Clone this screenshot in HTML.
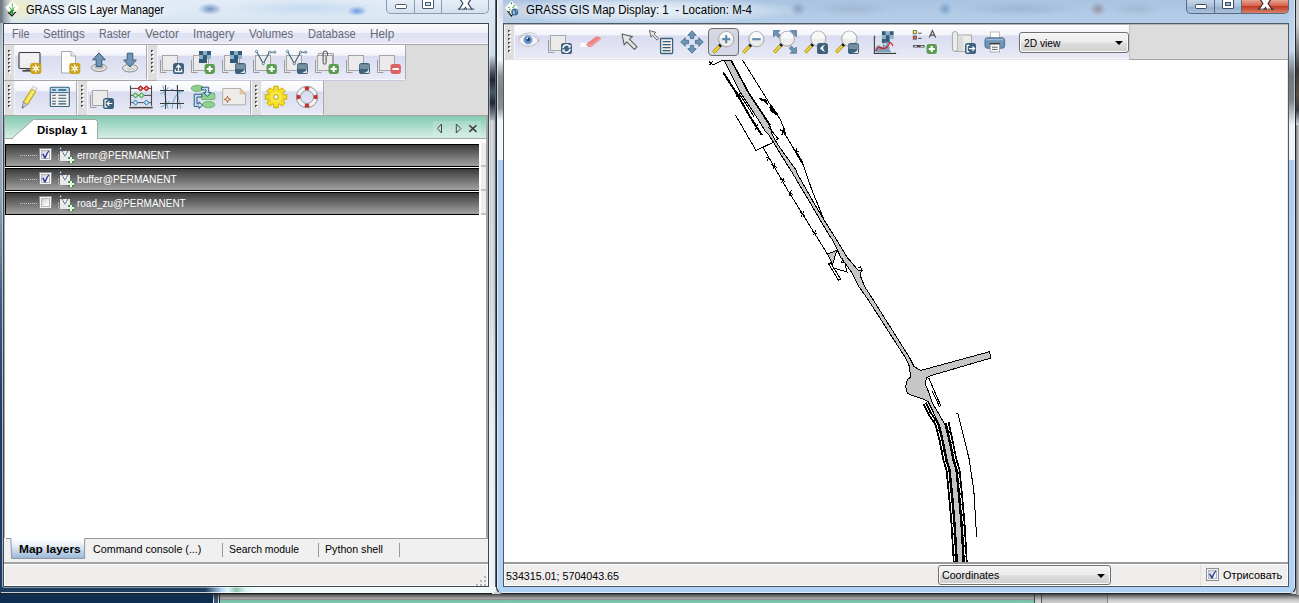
<!DOCTYPE html>
<html>
<head>
<meta charset="utf-8">
<title>GRASS GIS</title>
<style>
html,body{margin:0;padding:0;}
body{width:1299px;height:603px;overflow:hidden;position:relative;background:#7fc6ae;font-family:"Liberation Sans",sans-serif;font-size:12px;color:#000;}
.a{position:absolute;}
.t{position:absolute;white-space:nowrap;line-height:16px;height:16px;transform-origin:0 50%;}
svg{position:absolute;overflow:visible;}
.tb{position:absolute;background:linear-gradient(#fefeff 0,#f3f4fa 30%,#d9dcf0 33%,#e8eaf6 100%);border-bottom:1px solid #f4f5fb;box-sizing:border-box;}
.grip{position:absolute;left:0;top:0;bottom:-1px;width:9px;background:#dedede;border-left:1px solid #fafafa;border-right:1px solid #f4f4fa;}
.grip i{position:absolute;left:3px;width:3px;height:3px;background:linear-gradient(135deg,#2e2e2e 0,#5a5a5a 38%,#fff 55%);}
.row{position:absolute;left:5px;width:474px;height:23px;box-sizing:border-box;border:1px solid #000;border-right:none;background:linear-gradient(#3b3b3b,#a2a2a2);}
.cb{position:absolute;width:13px;height:13px;box-sizing:border-box;border:1px solid #8e8f8f;background:#f4f4f4;}
.cb b{position:absolute;left:1px;top:1px;right:1px;bottom:1px;border:1px solid #b2b7bd;background:linear-gradient(135deg,#cdd1d6,#f8f8f8 80%);}
.combo{position:absolute;box-sizing:border-box;border:1px solid #707070;border-radius:3px;background:linear-gradient(#f4f4f4 0,#ececec 48%,#dedede 52%,#cfcfcf 100%);box-shadow:inset 0 0 0 1px #fcfcfc;}
.arr{position:absolute;width:0;height:0;border-left:4px solid transparent;border-right:4px solid transparent;border-top:4px solid #000;}
.vsep{position:absolute;width:1px;background:#9a9a9a;}
</style>
</head>
<body>
<div class="a" style="left:0px;top:585px;width:213px;height:18px;background:#0f2d4e;"></div>
<div class="a" style="left:213px;top:590px;width:1px;height:13px;background:#dfe6ee;"></div>
<div class="a" style="left:214px;top:590px;width:4px;height:13px;background:#3d5a7c;"></div>
<div class="a" style="left:218px;top:590px;width:1px;height:13px;background:#dfe6ee;"></div>
<div class="a" style="left:219px;top:590px;width:1px;height:13px;background:#1a2c44;"></div>
<div class="a" style="left:220px;top:590px;width:814px;height:10px;background:#cfcfcf;"></div>
<div class="a" style="left:220px;top:599px;width:814px;height:1px;background:#a69e9e;"></div>
<div class="a" style="left:1034px;top:585px;width:1px;height:18px;background:#4a4a4a;"></div>
<div class="a" style="left:1035px;top:585px;width:6px;height:18px;background:#d2d2d2;"></div>
<div class="a" style="left:1041px;top:585px;width:1px;height:18px;background:#5a5a5a;"></div>
<div class="a" style="left:1042px;top:585px;width:66px;height:18px;background:#cacaca;"></div>
<div class="a" style="left:1107px;top:585px;width:1px;height:18px;background:#8e8e8e;"></div>
<div class="a" style="left:1108px;top:585px;width:191px;height:18px;background:#d9d9d9;"></div>
<div class="a" style="left:1296px;top:0px;width:3px;height:603px;background:linear-gradient(#c9c9c9 0,#c9c9c9 25px,#8a8a8a 45px,#3c3a3c 70px,#5a5044 95px,#3a3c44 110px,#cfd3d8 125px,#d8d8d8 100%);"></div>
<div class="a" style="left:213px;top:594px;width:1086px;height:8px;background:linear-gradient(rgba(30,30,30,0.8),rgba(50,50,50,0.42) 40%,rgba(80,80,80,0.12) 75%,rgba(80,80,80,0));"></div>
<div class="a" style="left:1296px;top:125px;width:3px;height:470px;background:linear-gradient(90deg,#7a7a7a,#a6a6a6 50%,#c6c6c6);"></div>
<div class="a" style="left:0px;top:0px;width:497px;height:594px;background:linear-gradient(#e2ecf6,#d8e6f3 24px,#d2e1f0);border-radius:0 0 7px 7px;"></div>
<div class="a" style="left:0px;top:0px;width:3px;height:594px;background:linear-gradient(#9aa3ad 0,#b9c6d3 60px,#8ea0b4 200px,#3f5c7e 300px,#1c3c60 420px,#1c3c60 100%);border-radius:0 0 0 7px;"></div>
<div class="a" style="left:2px;top:23px;width:1px;height:564px;background:linear-gradient(#c9d6e2,#9fb1c4);"></div>
<div class="a" style="left:489px;top:0px;width:6px;height:590px;background:linear-gradient(#dfeaf4 0,#d0dce6 55px,#4a5460 72px,#1e2630 80px,#4a5866 92px,#1e2834 103px,#6a7682 113px,#bcc0c4 122px,#c6cace 300px,#d4dde4 360px,#e2ecf1 440px,#e6eff3 100%);"></div>
<div class="a" style="left:490px;top:120px;width:4px;height:467px;background:linear-gradient(90deg,rgba(255,255,255,0),rgba(255,255,255,0.5),rgba(255,255,255,0));"></div>
<div class="a" style="left:495px;top:0px;width:1px;height:590px;background:#5a626c;"></div>
<div class="a" style="left:0px;top:587px;width:497px;height:7px;background:linear-gradient(90deg,#1c3c60 0,#1c3c60 205px,#b9d8f4 222px,#e2f6fb 228px,#8cc3ae 236px,#dff4f6 246px,#f2fbfc 260px,#eef8fa 100%);border-radius:0 0 7px 7px;"></div>
<div class="a" style="left:3px;top:587px;width:486px;height:1px;background:rgba(255,255,255,0.45);"></div>
<div class="a" style="left:489px;top:23px;width:1px;height:564px;background:rgba(255,255,255,0.5);"></div>
<div class="a" style="left:1px;top:592px;width:490px;height:1px;background:rgba(255,255,255,0.75);"></div>
<div class="a" style="left:0px;top:593px;width:492px;height:1px;background:#1a1e24;"></div>
<div class="a" style="left:0px;top:0px;width:40px;height:23px;background:radial-gradient(ellipse 22px 15px at 19px 8px,rgba(238,236,196,1),rgba(238,236,200,0.6) 55%,rgba(240,238,200,0) 100%);"></div>
<div class="a" style="left:0px;top:0px;width:12px;height:23px;background:linear-gradient(90deg,rgba(104,112,122,0.95),rgba(110,118,128,0.5) 45%,rgba(110,118,128,0));"></div>
<div class="a" style="left:20px;top:2px;width:160px;height:20px;background:radial-gradient(ellipse 80px 11px at 50% 50%,rgba(255,255,255,0.75),rgba(255,255,255,0));"></div>
<div class="a" style="left:195px;top:2px;width:30px;height:14px;background:radial-gradient(ellipse 12px 6px at 50% 50%,rgba(70,110,180,0.7),rgba(120,160,215,0));"></div>
<div class="a" style="left:342px;top:4px;width:30px;height:14px;background:radial-gradient(ellipse 10px 5px at 50% 50%,rgba(60,120,215,0.75),rgba(110,160,225,0));"></div>
<div class="a" style="left:225px;top:0px;width:160px;height:20px;background:radial-gradient(ellipse 80px 9px at 50% 40%,rgba(170,200,235,0.45),rgba(170,200,235,0));"></div>
<div class="t" id="title1" style="left:26px;top:2.03px;font-size:12px;font-weight:normal;color:#000;transform:scaleX(0.9195);">GRASS GIS Layer Manager</div>
<svg style="left:4px;top:0" width="16" height="17"><path d="M8 1L14.9 7.4L8 15.7L1.2 7.4z" fill="#fff"/><path d="M4.2 12.2L8 15.8L11.6 11.8" fill="none" stroke="#111" stroke-width="1.2"/><path d="M8 13.4q-0.2 -3.4 -2.4 -5.8M8 13q0.6 -3.2 2.4 -5.6M8.2 12.4q-0.2 -4.6 0.3 -8.6" fill="none" stroke="#2aa32e" stroke-width="0.9" stroke-linecap="round" stroke-dasharray="1.6 0.9"/><path d="M6 11.6l3.6 -1.2M6.4 12.6l2.6 0.4M7.2 11l1.6 1.8" stroke="#168a1e" stroke-width="1.1" stroke-linecap="round"/><path d="M7.6 2.4l0.1 0M5.2 5l0.1 0" stroke="#8ed08e" stroke-width="0.8" stroke-linecap="round"/></svg>
<div class="a" style="left:386px;top:0px;width:103px;height:14px;border:1px solid #8d9cae;border-top:none;border-radius:0 0 5px 5px;box-sizing:border-box;background:linear-gradient(#e6eff8,#d3e0ee);"></div>
<div class="a" style="left:414px;top:0px;width:1px;height:13px;background:#8d9cae;"></div>
<div class="a" style="left:441px;top:0px;width:1px;height:13px;background:#8d9cae;"></div>
<div class="a" style="left:395px;top:4px;width:12px;height:5px;background:#fff;border:1px solid #4e5867;box-sizing:border-box;border-radius:1.5px;"></div>
<div class="a" style="left:422px;top:-1px;width:12px;height:10px;background:#fff;border:1px solid #4e5867;box-sizing:border-box;border-radius:1px;"></div>
<div class="a" style="left:425px;top:2px;width:6px;height:4px;background:#c4e2f2;border:1px solid #4e5867;box-sizing:border-box;"></div>
<svg style="left:457px;top:0;overflow:hidden" width="18" height="9.6"><path d="M3.6 -4L13.4 11M13.4 -4L3.6 11" stroke="#3e4857" stroke-width="5.6" fill="none"/><path d="M3.6 -4L13.4 11M13.4 -4L3.6 11" stroke="#fff" stroke-width="3.2" fill="none"/><path d="M0.8 9.1h6.6M10.6 9.1h6.6" stroke="#3e4857" stroke-width="1"/></svg>
<div class="a" style="left:3px;top:23px;width:486px;height:564px;background:#3e4650;"></div>
<div class="a" style="left:4px;top:24px;width:484px;height:562px;background:#dcdcdc;"></div>
<div class="a" style="left:4px;top:24px;width:484px;height:19px;background:linear-gradient(#fcfcfe 0,#f0f1f9 45%,#dfe2f2 50%,#e5e7f5 100%);"></div>
<div class="a" style="left:4px;top:43px;width:484px;height:1px;background:#f6f6fb;"></div>
<div class="t" id="mn0" style="left:11.5px;top:26.03px;font-size:12px;font-weight:normal;color:#686a76;transform:scaleX(0.8995);">File</div>
<div class="t" id="mn1" style="left:43px;top:26.03px;font-size:12px;font-weight:normal;color:#686a76;transform:scaleX(0.9617);">Settings</div>
<div class="t" id="mn2" style="left:99.3px;top:26.03px;font-size:12px;font-weight:normal;color:#686a76;transform:scaleX(0.8941);">Raster</div>
<div class="t" id="mn3" style="left:145px;top:26.03px;font-size:12px;font-weight:normal;color:#686a76;transform:scaleX(0.9991);">Vector</div>
<div class="t" id="mn4" style="left:193.2px;top:26.03px;font-size:12px;font-weight:normal;color:#686a76;transform:scaleX(0.9594);">Imagery</div>
<div class="t" id="mn5" style="left:249.4px;top:26.03px;font-size:12px;font-weight:normal;color:#686a76;transform:scaleX(0.9624);">Volumes</div>
<div class="t" id="mn6" style="left:308px;top:26.03px;font-size:12px;font-weight:normal;color:#686a76;transform:scaleX(0.9285);">Database</div>
<div class="t" id="mn7" style="left:370.3px;top:26.03px;font-size:12px;font-weight:normal;color:#686a76;transform:scaleX(0.9803);">Help</div>
<div class="a" style="left:4px;top:44px;width:484px;height:1px;background:#a8a8a8;"></div>
<div class="a" style="left:4px;top:80px;width:153px;height:1px;background:#a6a6a6;"></div>
<div class="a" style="left:157px;top:80px;width:249px;height:1px;background:#c6cadc;"></div>
<div class="a" style="left:4px;top:115px;width:484px;height:1px;background:#a9a3a3;"></div>
<div class="tb" style="left:4px;top:45px;width:143px;height:35px;border-right:1px solid #a8a8ae;"><div class="grip"><i style="top:5px"></i><i style="top:9px"></i><i style="top:13px"></i><i style="top:17px"></i><i style="top:21px"></i><i style="top:25px"></i></div></div>
<svg class="ic" style="left:18px;top:50px" width="24" height="24" viewBox="0 0 24 24"><rect x="1" y="2.5" width="21" height="16" rx="1" fill="#ececec" stroke="#3c3c3c" stroke-width="1.1"/><path d="M2 3.5h19v7q-9 1 -19 6z" fill="#f6f6f6" opacity="0.6"/><rect x="4.5" y="20" width="9" height="1.6" fill="#3c3c3c"/><rect x="8" y="18.8" width="4" height="1.4" fill="#8a8a8a"/><rect x="12.3" y="13" width="11" height="11" rx="2.4" fill="#c9a31b"/><path d="M17.8 18.5L21.2641 20.5" stroke="#fff" stroke-width="1.2"/><path d="M17.8 18.5L17.8 22.5" stroke="#fff" stroke-width="1.2"/><path d="M17.8 18.5L14.3359 20.5" stroke="#fff" stroke-width="1.2"/><path d="M17.8 18.5L14.3359 16.5" stroke="#fff" stroke-width="1.2"/><path d="M17.8 18.5L17.8 14.5" stroke="#fff" stroke-width="1.2"/><path d="M17.8 18.5L21.2641 16.5" stroke="#fff" stroke-width="1.2"/><circle cx="17.8" cy="18.5" r="1.9" fill="#fff"/><circle cx="17.8" cy="18.5" r="0.9" fill="#e8d27a"/></svg>
<svg class="ic" style="left:57px;top:50px" width="24" height="24" viewBox="0 0 24 24"><path d="M4.5 1.5h9.5l4.5 4.5v17h-14z" fill="#fdfdfd" stroke="#a8a8a8"/><path d="M14 1.5v4.5h4.5" fill="#f0f0f0" stroke="#a8a8a8"/><rect x="12.3" y="13" width="11" height="11" rx="2.4" fill="#c9a31b"/><path d="M17.8 18.5L21.2641 20.5" stroke="#fff" stroke-width="1.2"/><path d="M17.8 18.5L17.8 22.5" stroke="#fff" stroke-width="1.2"/><path d="M17.8 18.5L14.3359 20.5" stroke="#fff" stroke-width="1.2"/><path d="M17.8 18.5L14.3359 16.5" stroke="#fff" stroke-width="1.2"/><path d="M17.8 18.5L17.8 14.5" stroke="#fff" stroke-width="1.2"/><path d="M17.8 18.5L21.2641 16.5" stroke="#fff" stroke-width="1.2"/><circle cx="17.8" cy="18.5" r="1.9" fill="#fff"/><circle cx="17.8" cy="18.5" r="0.9" fill="#e8d27a"/></svg>
<svg class="ic" style="left:87px;top:50px" width="24" height="24" viewBox="0 0 24 24"><ellipse cx="12" cy="17.7" rx="7.6" ry="3.8" fill="#e4e4e4" stroke="#8e8e8e"/><ellipse cx="12" cy="17.2" rx="5" ry="2" fill="#c4c4c4"/><path d="M12 2.8l6.3 7h-3.5v6.8h-5.6v-6.8h-3.5z" fill="#6e96b4" stroke="#3b5d78" stroke-linejoin="round"/></svg>
<svg class="ic" style="left:118px;top:50px" width="24" height="24" viewBox="0 0 24 24"><ellipse cx="12" cy="18.2" rx="7.6" ry="3.8" fill="#e4e4e4" stroke="#8e8e8e"/><ellipse cx="13" cy="19" rx="4" ry="1.6" fill="#cfcfcf"/><path d="M12 17l-6.3 -7h3.5v-6.8h5.6v6.8h3.5z" fill="#6e96b4" stroke="#3b5d78" stroke-linejoin="round"/></svg>
<div class="tb" style="left:147px;top:45px;width:259px;height:35px;border-right:1px solid #a8a8ae;"><div class="grip"><i style="top:5px"></i><i style="top:9px"></i><i style="top:13px"></i><i style="top:17px"></i><i style="top:21px"></i><i style="top:25px"></i></div></div>
<svg class="ic" style="left:160px;top:50px" width="24" height="24" viewBox="0 0 24 24"><path d="M0.5 10v12.5h6" fill="none" stroke="#9c9c9c" stroke-width="1"/><rect x="2.5" y="5.5" width="15" height="15" fill="#ebebeb" stroke="#a6a6a6"/><rect x="13" y="13" width="11" height="11" rx="2.6" fill="#3f627c"/><path d="M18.5 21v-5.2M16.2 17.6l2.3 -2.4l2.3 2.4" fill="none" stroke="#fff" stroke-width="1.3"/><path d="M15.3 19.3v2.4h6.4v-2.4" fill="none" stroke="#fff" stroke-width="1.2"/></svg>
<svg class="ic" style="left:191px;top:50px" width="24" height="24" viewBox="0 0 24 24"><path d="M0.5 10v12.5h6" fill="none" stroke="#9c9c9c" stroke-width="1"/><rect x="2.5" y="5.5" width="15" height="15" fill="#ebebeb" stroke="#a6a6a6"/><rect x="8" y="1" width="4" height="4" fill="#335a78"/><rect x="12" y="1" width="4" height="4" fill="#8fb0c9"/><rect x="16" y="1" width="4" height="4" fill="#335a78"/><rect x="8" y="5" width="4" height="4" fill="#8fb0c9"/><rect x="12" y="5" width="4" height="4" fill="#335a78"/><rect x="16" y="5" width="4" height="4" fill="#8fb0c9"/><rect x="8" y="9" width="4" height="4" fill="#335a78"/><rect x="12" y="9" width="4" height="4" fill="#335a78"/><rect x="13.5" y="14" width="10.4" height="10" rx="2.4" fill="#5c9c52"/><path d="M15.7 19h6M18.7 16v6" stroke="#fff" stroke-width="2" fill="none"/></svg>
<svg class="ic" style="left:222px;top:50px" width="24" height="24" viewBox="0 0 24 24"><path d="M0.5 10v12.5h6" fill="none" stroke="#9c9c9c" stroke-width="1"/><rect x="2.5" y="5.5" width="15" height="15" fill="#ebebeb" stroke="#a6a6a6"/><rect x="8" y="1" width="4" height="4" fill="#335a78"/><rect x="12" y="1" width="4" height="4" fill="#8fb0c9"/><rect x="16" y="1" width="4" height="4" fill="#335a78"/><rect x="8" y="5" width="4" height="4" fill="#8fb0c9"/><rect x="12" y="5" width="4" height="4" fill="#335a78"/><rect x="16" y="5" width="4" height="4" fill="#8fb0c9"/><rect x="8" y="9" width="4" height="4" fill="#335a78"/><rect x="12" y="9" width="4" height="4" fill="#335a78"/><rect x="13" y="13" width="11" height="11" rx="2.6" fill="#3f627c"/><path d="M14.8 14.2h7.4a1.2 1.2 0 0 1 1.2 1.2v3.4q-5 0.4 -9.8 0v-3.4a1.2 1.2 0 0 1 1.2 -1.2z" fill="#76909f"/><path d="M23 23v-5.2q-0.6 4.4 -5.4 5.2z" fill="#e4e4e4"/></svg>
<svg class="ic" style="left:253px;top:50px" width="24" height="24" viewBox="0 0 24 24"><path d="M0.5 10v12.5h6" fill="none" stroke="#9c9c9c" stroke-width="1"/><rect x="2.5" y="5.5" width="15" height="15" fill="#ebebeb" stroke="#a6a6a6"/><path d="M3.5 1.5L10.3 13.6L16.5 2.2h5.3" fill="none" stroke="#3d6483" stroke-width="1.1"/><circle cx="3.5" cy="1.5" r="1.1" fill="#fff" stroke="#3d6483" stroke-width="0.8"/><circle cx="10.3" cy="13.6" r="1.1" fill="#fff" stroke="#3d6483" stroke-width="0.8"/><circle cx="16.5" cy="2.2" r="1.1" fill="#fff" stroke="#3d6483" stroke-width="0.8"/><circle cx="21.8" cy="2.2" r="1.1" fill="#fff" stroke="#3d6483" stroke-width="0.8"/><rect x="13.5" y="14" width="10.4" height="10" rx="2.4" fill="#5c9c52"/><path d="M15.7 19h6M18.7 16v6" stroke="#fff" stroke-width="2" fill="none"/></svg>
<svg class="ic" style="left:284px;top:50px" width="24" height="24" viewBox="0 0 24 24"><path d="M0.5 10v12.5h6" fill="none" stroke="#9c9c9c" stroke-width="1"/><rect x="2.5" y="5.5" width="15" height="15" fill="#ebebeb" stroke="#a6a6a6"/><path d="M3.5 1.5L10.3 13.6L16.5 2.2h5.3" fill="none" stroke="#3d6483" stroke-width="1.1"/><circle cx="3.5" cy="1.5" r="1.1" fill="#fff" stroke="#3d6483" stroke-width="0.8"/><circle cx="10.3" cy="13.6" r="1.1" fill="#fff" stroke="#3d6483" stroke-width="0.8"/><circle cx="16.5" cy="2.2" r="1.1" fill="#fff" stroke="#3d6483" stroke-width="0.8"/><circle cx="21.8" cy="2.2" r="1.1" fill="#fff" stroke="#3d6483" stroke-width="0.8"/><rect x="13" y="13" width="11" height="11" rx="2.6" fill="#3f627c"/><path d="M14.8 14.2h7.4a1.2 1.2 0 0 1 1.2 1.2v3.4q-5 0.4 -9.8 0v-3.4a1.2 1.2 0 0 1 1.2 -1.2z" fill="#76909f"/><path d="M23 23v-5.2q-0.6 4.4 -5.4 5.2z" fill="#e4e4e4"/></svg>
<svg class="ic" style="left:315px;top:50px" width="24" height="24" viewBox="0 0 24 24"><path d="M0.5 10v12.5h6" fill="none" stroke="#9c9c9c"/><rect x="3.5" y="3.5" width="15" height="17" fill="#ebebeb" stroke="#a6a6a6"/><rect x="2.5" y="5.5" width="15" height="15" fill="#ebebeb" stroke="#a6a6a6"/><path d="M12.5 5.5v-2.3a2.2 2.2 0 0 0 -4.4 0v9.5a1.5 1.5 0 0 0 3 0v-7" fill="none" stroke="#4a4a4a" stroke-width="1"/><rect x="13.5" y="14" width="10.4" height="10" rx="2.4" fill="#5c9c52"/><path d="M15.7 19h6M18.7 16v6" stroke="#fff" stroke-width="2" fill="none"/></svg>
<svg class="ic" style="left:346px;top:50px" width="24" height="24" viewBox="0 0 24 24"><path d="M0.5 10v12.5h6" fill="none" stroke="#9c9c9c" stroke-width="1"/><rect x="2.5" y="5.5" width="15" height="15" fill="#ebebeb" stroke="#a6a6a6"/><rect x="13" y="13" width="11" height="11" rx="2.6" fill="#3f627c"/><path d="M14.8 14.2h7.4a1.2 1.2 0 0 1 1.2 1.2v3.4q-5 0.4 -9.8 0v-3.4a1.2 1.2 0 0 1 1.2 -1.2z" fill="#76909f"/><path d="M23 23v-5.2q-0.6 4.4 -5.4 5.2z" fill="#e4e4e4"/></svg>
<svg class="ic" style="left:377px;top:50px" width="24" height="24" viewBox="0 0 24 24"><path d="M0.5 10v12.5h6" fill="none" stroke="#9c9c9c" stroke-width="1"/><rect x="2.5" y="5.5" width="15" height="15" fill="#ebebeb" stroke="#a6a6a6"/><rect x="13.5" y="14" width="10.4" height="10" rx="2.4" fill="#dc6262"/><path d="M15.5 19h6.4" stroke="#fff" stroke-width="2" fill="none"/></svg>
<div class="tb" style="left:4px;top:81px;width:73px;height:34px;border-right:1px solid #a8a8ae;"><div class="grip"><i style="top:4px"></i><i style="top:8px"></i><i style="top:12px"></i><i style="top:16px"></i><i style="top:20px"></i><i style="top:24px"></i></div></div>
<svg class="ic" style="left:16.5px;top:85px" width="24" height="24" viewBox="0 0 24 24"><path d="M15.8 1.2l4.4 2.2l-1.4 3l-4.4 -2.2z" fill="#f3eeee" stroke="#c9c0c0" stroke-width="0.8"/><path d="M14.4 4.2l4.4 2.2l-8.2 13.2l-4.4 -2.6z" fill="#ecd83e" stroke="#b7a21a" stroke-width="1"/><path d="M16 5l1.6 0.8l-8.2 13.2l-1.6 -0.9z" fill="#f8ee8a"/><path d="M6.2 17l4.4 2.6l-5.6 3.8z" fill="#c8c8c8" stroke="#8a8a8a" stroke-width="0.8"/><path d="M5.6 21.2l1.3 0.8l-1.9 1.4z" fill="#555"/></svg>
<svg class="ic" style="left:49px;top:85px" width="24" height="24" viewBox="0 0 24 24"><rect x="1.3" y="2.3" width="19" height="19.2" rx="1" fill="#f5f1ea" stroke="#3a6484" stroke-width="1.2"/><rect x="1.8" y="2.8" width="17.4" height="4.4" fill="#b9def2"/><path d="M1.5 7.6h18" stroke="#3a6484" stroke-width="1"/><path d="M3.2 5h3.6M9.4 5h7.8" stroke="#2f5877" stroke-width="1.6"/><path d="M3.2 10.3h3.6M9.4 10.3h7.8M3.2 13.3h3.6M9.4 13.3h7.8M3.2 16.3h3.6M9.4 16.3h7.8M3.2 18.9h3.6M9.4 18.9h7.8" stroke="#2f5877" stroke-width="1.1"/></svg>
<div class="tb" style="left:77px;top:81px;width:174px;height:34px;border-right:1px solid #a8a8ae;"><div class="grip"><i style="top:4px"></i><i style="top:8px"></i><i style="top:12px"></i><i style="top:16px"></i><i style="top:20px"></i><i style="top:24px"></i></div></div>
<svg class="ic" style="left:90px;top:85px" width="24" height="24" viewBox="0 0 24 24"><path d="M0.5 10v12.5h6" fill="none" stroke="#9c9c9c" stroke-width="1"/><rect x="2.5" y="5.5" width="15" height="15" fill="#ebebeb" stroke="#a6a6a6"/><rect x="13" y="13" width="11" height="11" rx="2.6" fill="#3f627c"/><path d="M17.3 15.2h-2.2v6.6h2.2" fill="none" stroke="#fff" stroke-width="1.2"/><path d="M22.3 18.5h-5M19.4 16.4l-2.2 2.1l2.2 2.1" fill="none" stroke="#fff" stroke-width="1.2"/></svg>
<svg class="ic" style="left:129px;top:85px" width="24" height="24" viewBox="0 0 24 24"><path d="M1.5 0.5v22M22.5 0.5v22" stroke="#4a4a4a" stroke-width="1.1"/><path d="M0.3 22.6h23.4" stroke="#4a4a4a" stroke-width="1.6"/><path d="M1 21.3h22" stroke="#dcdcdc" stroke-width="1"/><path d="M1.5 3.4h21M1.5 10.4h21M1.5 17.6h21" stroke="#4a4a4a" stroke-width="1"/><path d="M11.5 0.7l2.7 2.7l-2.7 2.7l-2.7 -2.7z" fill="#e03030" stroke="#a01010" stroke-width="0.9"/><path d="M11.5 2.3l1.1 1.1l-1.1 1.1l-1.1 -1.1z" fill="#fff" opacity="0.8"/><path d="M17.4 0.7l2.7 2.7l-2.7 2.7l-2.7 -2.7z" fill="#e03030" stroke="#a01010" stroke-width="0.9"/><path d="M17.4 2.3l1.1 1.1l-1.1 1.1l-1.1 -1.1z" fill="#fff" opacity="0.8"/><path d="M6.5 7.7l2.7 2.7l-2.7 2.7l-2.7 -2.7z" fill="#7fd07f" stroke="#3a9a3a" stroke-width="0.9"/><path d="M6.5 9.3l1.1 1.1l-1.1 1.1l-1.1 -1.1z" fill="#fff" opacity="0.8"/><path d="M12.5 7.7l2.7 2.7l-2.7 2.7l-2.7 -2.7z" fill="#7fd07f" stroke="#3a9a3a" stroke-width="0.9"/><path d="M12.5 9.3l1.1 1.1l-1.1 1.1l-1.1 -1.1z" fill="#fff" opacity="0.8"/><path d="M6.5 14.9l2.7 2.7l-2.7 2.7l-2.7 -2.7z" fill="#8cc4e6" stroke="#3a7aa8" stroke-width="0.9"/><path d="M6.5 16.5l1.1 1.1l-1.1 1.1l-1.1 -1.1z" fill="#fff" opacity="0.8"/><path d="M17.4 14.9l2.7 2.7l-2.7 2.7l-2.7 -2.7z" fill="#8cc4e6" stroke="#3a7aa8" stroke-width="0.9"/><path d="M17.4 16.5l1.1 1.1l-1.1 1.1l-1.1 -1.1z" fill="#fff" opacity="0.8"/></svg>
<svg class="ic" style="left:160px;top:85px" width="24" height="24" viewBox="0 0 24 24"><path d="M0.5 9q5 -2 8 -6.5M3 0.5q2 12 5 23M0.5 22q6 -1.5 9 -6M12 23.5q1 -8 3.5 -12t7.5 -6M17 0.5q1 14 4 23M11 4q6 3 12.5 2.5" fill="none" stroke="#7fb0d0" stroke-width="1.2"/><path d="M5.5 0v24M17.5 0v24M0 5.5h24M0 18.5h24" stroke="#3c3c3c" stroke-width="1"/></svg>
<svg class="ic" style="left:191px;top:85px" width="24" height="24" viewBox="0 0 24 24"><ellipse cx="6.3" cy="3.3" rx="6.1" ry="3.1" fill="#8fcf8f" stroke="#5aa85a" stroke-width="0.8"/><rect x="10.4" y="8" width="13.4" height="6.6" rx="1" fill="#8fcf8f" stroke="#5aa85a" stroke-width="0.8"/><ellipse cx="17.6" cy="19.6" rx="6.2" ry="3.2" fill="#8fcf8f" stroke="#5aa85a" stroke-width="0.8"/><path d="M10.5 2.2h7.2v5.3h2.3l-3.7 4l-3.7 -4h2.3v-2.6h-4.4z" fill="#bfe0f4" stroke="#2f5877" stroke-width="1"/><path d="M11 9.2h-7.8v12.4h4.8v2l3.6 -3.4l-3.6 -3.4v2h-2v-6.8h5z" fill="#bfe0f4" stroke="#2f5877" stroke-width="1"/></svg>
<svg class="ic" style="left:222px;top:85px" width="24" height="24" viewBox="0 0 24 24"><path d="M0.7 3.5h17.5l5.3 5.3v11h-22.8z" fill="#eeeceb" stroke="#b4b0ac"/><path d="M18.2 3.5v5.3h5.3z" fill="#f3c78c" stroke="#c9b090" stroke-width="0.8"/><path d="M5.5 11.2l0.8 2.4l2.4 0.8l-2.4 0.8l-0.8 2.4l-0.8 -2.4l-2.4 -0.8l2.4 -0.8z" fill="#fff" stroke="#b0501c" stroke-width="0.9"/></svg>
<div class="tb" style="left:251px;top:81px;width:73px;height:34px;border-right:1px solid #a8a8ae;"><div class="grip"><i style="top:4px"></i><i style="top:8px"></i><i style="top:12px"></i><i style="top:16px"></i><i style="top:20px"></i><i style="top:24px"></i></div></div>
<svg class="ic" style="left:264px;top:85px" width="24" height="24" viewBox="0 0 24 24"><path d="M9.64 4.36L9.81 1.22L14.19 1.22L14.36 4.36L15.73 4.92L18.08 2.83L21.17 5.92L19.08 8.27L19.64 9.64L22.78 9.81L22.78 14.19L19.64 14.36L19.08 15.73L21.17 18.08L18.08 21.17L15.73 19.08L14.36 19.64L14.19 22.78L9.81 22.78L9.64 19.64L8.27 19.08L5.92 21.17L2.83 18.08L4.92 15.73L4.36 14.36L1.22 14.19L1.22 9.81L4.36 9.64L4.92 8.27L2.83 5.92L5.92 2.83L8.27 4.92z" fill="#f2de22" stroke="#c7ac00" stroke-width="1" stroke-linejoin="round"/><circle cx="12" cy="12" r="5.6" fill="#f7e84a"/><rect x="9.8" y="9.8" width="4.4" height="4.4" rx="1.2" fill="#eef0f8" stroke="#c7ac00" stroke-width="1"/></svg>
<svg class="ic" style="left:295px;top:85px" width="24" height="24" viewBox="0 0 24 24"><circle cx="12" cy="12" r="8.6" fill="none" stroke="#f4f4f4" stroke-width="4.2"/><path d="M12 1.3a10.7 10.7 0 0 1 2.6 0.3l-1 4.1a6.5 6.5 0 0 0 -3.2 0l-1 -4.1a10.7 10.7 0 0 1 2.6 -0.3z" fill="#d22a2a" transform="rotate(0 12 12)"/><path d="M12 1.3a10.7 10.7 0 0 1 2.6 0.3l-1 4.1a6.5 6.5 0 0 0 -3.2 0l-1 -4.1a10.7 10.7 0 0 1 2.6 -0.3z" fill="#d22a2a" transform="rotate(90 12 12)"/><path d="M12 1.3a10.7 10.7 0 0 1 2.6 0.3l-1 4.1a6.5 6.5 0 0 0 -3.2 0l-1 -4.1a10.7 10.7 0 0 1 2.6 -0.3z" fill="#d22a2a" transform="rotate(180 12 12)"/><path d="M12 1.3a10.7 10.7 0 0 1 2.6 0.3l-1 4.1a6.5 6.5 0 0 0 -3.2 0l-1 -4.1a10.7 10.7 0 0 1 2.6 -0.3z" fill="#d22a2a" transform="rotate(270 12 12)"/><circle cx="12" cy="12" r="10.7" fill="none" stroke="#8c8c8c" stroke-width="0.9"/><circle cx="12" cy="12" r="6.5" fill="none" stroke="#8c8c8c" stroke-width="0.9"/></svg>
<div class="a" style="left:4px;top:116px;width:484px;height:23px;background:linear-gradient(#84cab2,#d9f0e7);"></div>
<div class="a" style="left:4px;top:139px;width:484px;height:400px;background:#fff;"></div>
<svg style="left:4px;top:115px" width="100" height="24"><path d="M8 23.5L29.5 4.5H91.5L93.5 6.5V23.5z" fill="#fff" stroke="#a0a6a3" stroke-width="1"/></svg>
<div class="a" style="left:4px;top:138px;width:484px;height:1px;background:#a4aaa7;"></div>
<div class="a" style="left:13px;top:138px;width:84px;height:2px;background:#fff;"></div>
<div class="a" style="left:4px;top:115px;width:1px;height:424px;background:#a8a8a8;"></div>
<div class="t" id="disp" style="left:37.4px;top:122.20px;font-size:11.5px;font-weight:bold;color:#000;transform:scaleX(0.9941);">Display 1</div>
<div class="a" style="left:433px;top:121px;width:48px;height:14px;background:rgba(255,255,255,0.16);"></div>
<svg style="left:433px;top:121px" width="48" height="14"><path d="M4.5 7.5l4 -4.5v9z" fill="none" stroke="#444" stroke-width="1"/><path d="M27.8 7.5l-4.5 -4.5v9z" fill="none" stroke="#444" stroke-width="1"/><path d="M36.3 4.3l7.2 6.6M43.5 4.3l-7.2 6.6" stroke="#3a3a3a" stroke-width="1.5"/></svg>
<div class="a" style="left:486px;top:116px;width:2px;height:423px;background:#a8a8a8;"></div>
<div class="a" style="left:481px;top:143px;width:5px;height:72px;background:#eeeeee;"></div>
<div class="row" style="top:144px"></div>
<div class="a" style="left:481px;top:165px;width:5px;height:2px;background:#c4c4c4;"></div>
<div class="a" style="left:20px;top:155px;width:18px;height:1px;background:repeating-linear-gradient(90deg,#c9c9c9 0,#c9c9c9 1px,transparent 1px,transparent 2px);"></div>
<div class="cb" style="left:39px;top:148px"><b></b></div>
<svg style="left:39px;top:148px" width="13" height="13"><path d="M3 6.2l1.4 -0.6l1.5 2.6q1.6 -3.6 3.6 -5.6l0.9 0.5q-2.2 2.8 -3.8 7.4h-1.4q-0.9 -2.4 -2.2 -4.3z" fill="#2f3f9c"/></svg>
<svg style="left:58px;top:147px" width="16" height="16"><path d="M0.5 7v8.5h4.3" fill="none" stroke="#a4a4a4"/><rect x="2" y="4" width="10" height="10" fill="#ebebeb"/><path d="M2.6 1.4L7 9.4L11 1.7" fill="none" stroke="#34607f" stroke-width="1" stroke-dasharray="2 0.6"/><path d="M12.6 1.7h0.8M14.6 1.7h0.6" stroke="#34607f" stroke-width="0.9"/><circle cx="2.6" cy="1.4" r="0.8" fill="#d4ecfa"/><circle cx="7.2" cy="9.6" r="0.6" fill="#d4ecfa"/><rect x="10" y="10" width="6" height="6" fill="#3c8c3a"/><path d="M10 13h6M13 10v6" stroke="#f4f4f4" stroke-width="2"/></svg>
<div class="t" id="row0" style="left:77px;top:147.36px;font-size:11px;font-weight:normal;color:#fff;transform:scaleX(0.9019);">error@PERMANENT</div>
<div class="row" style="top:168px"></div>
<div class="a" style="left:481px;top:189px;width:5px;height:2px;background:#c4c4c4;"></div>
<div class="a" style="left:20px;top:179px;width:18px;height:1px;background:repeating-linear-gradient(90deg,#c9c9c9 0,#c9c9c9 1px,transparent 1px,transparent 2px);"></div>
<div class="cb" style="left:39px;top:172px"><b></b></div>
<svg style="left:39px;top:172px" width="13" height="13"><path d="M3 6.2l1.4 -0.6l1.5 2.6q1.6 -3.6 3.6 -5.6l0.9 0.5q-2.2 2.8 -3.8 7.4h-1.4q-0.9 -2.4 -2.2 -4.3z" fill="#2f3f9c"/></svg>
<svg style="left:58px;top:171px" width="16" height="16"><path d="M0.5 7v8.5h4.3" fill="none" stroke="#a4a4a4"/><rect x="2" y="4" width="10" height="10" fill="#ebebeb"/><path d="M2.6 1.4L7 9.4L11 1.7" fill="none" stroke="#34607f" stroke-width="1" stroke-dasharray="2 0.6"/><path d="M12.6 1.7h0.8M14.6 1.7h0.6" stroke="#34607f" stroke-width="0.9"/><circle cx="2.6" cy="1.4" r="0.8" fill="#d4ecfa"/><circle cx="7.2" cy="9.6" r="0.6" fill="#d4ecfa"/><rect x="10" y="10" width="6" height="6" fill="#3c8c3a"/><path d="M10 13h6M13 10v6" stroke="#f4f4f4" stroke-width="2"/></svg>
<div class="t" id="row1" style="left:77px;top:171.36px;font-size:11px;font-weight:normal;color:#fff;transform:scaleX(0.9217);">buffer@PERMANENT</div>
<div class="row" style="top:192px"></div>
<div class="a" style="left:481px;top:213px;width:5px;height:2px;background:#c4c4c4;"></div>
<div class="a" style="left:20px;top:203px;width:18px;height:1px;background:repeating-linear-gradient(90deg,#c9c9c9 0,#c9c9c9 1px,transparent 1px,transparent 2px);"></div>
<div class="cb" style="left:39px;top:196px"><b></b></div>
<svg style="left:58px;top:195px" width="16" height="16"><path d="M0.5 7v8.5h4.3" fill="none" stroke="#a4a4a4"/><rect x="2" y="4" width="10" height="10" fill="#ebebeb"/><path d="M2.6 1.4L7 9.4L11 1.7" fill="none" stroke="#34607f" stroke-width="1" stroke-dasharray="2 0.6"/><path d="M12.6 1.7h0.8M14.6 1.7h0.6" stroke="#34607f" stroke-width="0.9"/><circle cx="2.6" cy="1.4" r="0.8" fill="#d4ecfa"/><circle cx="7.2" cy="9.6" r="0.6" fill="#d4ecfa"/><rect x="10" y="10" width="6" height="6" fill="#3c8c3a"/><path d="M10 13h6M13 10v6" stroke="#f4f4f4" stroke-width="2"/></svg>
<div class="t" id="row2" style="left:77px;top:195.36px;font-size:11px;font-weight:normal;color:#fff;transform:scaleX(0.9060);">road_zu@PERMANENT</div>
<div class="a" style="left:4px;top:538px;width:484px;height:1px;background:#9a9a9a;"></div>
<div class="a" style="left:4px;top:539px;width:484px;height:24px;background:#f0f0f0;"></div>
<div class="a" style="left:4px;top:562px;width:484px;height:2px;background:#a2a2a2;"></div>
<div class="a" style="left:4px;top:564px;width:484px;height:22px;background:#f0eded;border:1px solid #fff;box-sizing:border-box;"></div>
<svg style="left:4px;top:538px" width="90" height="23"><defs><linearGradient id="tg" x1="0" y1="0" x2="0" y2="1"><stop offset="0" stop-color="#ffffff"/><stop offset="0.3" stop-color="#eef3f9"/><stop offset="1" stop-color="#98b5d8"/></linearGradient></defs><path d="M6.9 0L7.6 20.5H80.6V0z" fill="url(#tg)"/><path d="M1.5 0.5H6.9L7.6 20.5H80.6V0.5" fill="none" stroke="#8c97a6" stroke-width="1"/></svg>
<div class="a" style="left:4px;top:538px;width:2px;height:1px;background:#f0f0f0;"></div>
<div class="t" id="bt0" style="left:19.2px;top:541.20px;font-size:11.5px;font-weight:bold;color:#000;transform:scaleX(1.0378);">Map layers</div>
<div class="t" id="bt1" style="left:92.6px;top:541.36px;font-size:11px;font-weight:normal;color:#000;transform:scaleX(0.9742);">Command console (...)</div>
<div class="t" id="bt2" style="left:229px;top:541.36px;font-size:11px;font-weight:normal;color:#000;transform:scaleX(0.9459);">Search module</div>
<div class="t" id="bt3" style="left:325px;top:541.36px;font-size:11px;font-weight:normal;color:#000;transform:scaleX(0.9677);">Python shell</div>
<div class="vsep" style="left:222px;top:543px;height:14px"></div>
<div class="vsep" style="left:318px;top:543px;height:14px"></div>
<div class="vsep" style="left:399px;top:543px;height:14px"></div>
<svg style="left:475px;top:574px" width="12" height="12"><path d="M9 2h2v2h-2zM5 6h2v2h-2zM9 6h2v2h-2zM1 10h2v2h-2zM5 10h2v2h-2zM9 10h2v2h-2z" fill="#b8b4b4"/></svg>
<div class="a" style="left:496px;top:0px;width:800px;height:594px;background:linear-gradient(#a9c3e1,#b7cfe9 24px,#aecdf0 160px,#b0d2f4 100%);border-radius:0 0 7px 7px;border:1px solid #20252b;border-top:none;box-sizing:border-box;"></div>
<div class="a" style="left:497px;top:0px;width:6px;height:160px;background:linear-gradient(#dde8f3 0,#eef3f8 60px,#8a929c 76px,#7c848e 92px,#8a929c 108px,#f2f5f8 120px,#f2f5f8 100%);"></div>
<div class="a" style="left:1289px;top:0px;width:6px;height:160px;background:linear-gradient(#b5cde8 0,#c5d8ea 50px,#70777f 75px,#7a828a 100px,#eef2f6 125px,#eef2f6 100%);"></div>
<div class="a" style="left:497px;top:0px;width:1px;height:588px;background:rgba(255,255,255,0.6);"></div>
<div class="a" style="left:1294px;top:0px;width:1px;height:588px;background:rgba(255,255,255,0.5);"></div>
<div class="a" style="left:498px;top:592px;width:796px;height:1px;background:rgba(255,255,255,0.6);"></div>
<div class="a" style="left:499px;top:0px;width:330px;height:23px;background:radial-gradient(ellipse 165px 13px at 43% 45%,rgba(240,245,250,0.95),rgba(240,245,250,0.55) 60%,rgba(240,245,250,0));"></div>
<div class="a" style="left:499px;top:0px;width:40px;height:23px;background:radial-gradient(ellipse 20px 12px at 30% 45%,rgba(205,205,215,0.8),rgba(205,205,215,0));"></div>
<div class="a" style="left:790px;top:1px;width:16px;height:16px;background:radial-gradient(ellipse 50% 45% at 50% 50%,rgba(70,90,130,0.35),rgba(0,0,0,0));"></div>
<div class="a" style="left:812px;top:1px;width:80px;height:16px;background:radial-gradient(ellipse 50% 45% at 50% 50%,rgba(120,130,150,0.22),rgba(0,0,0,0));"></div>
<div class="a" style="left:938px;top:1px;width:14px;height:16px;background:radial-gradient(ellipse 50% 45% at 50% 50%,rgba(40,110,170,0.4),rgba(0,0,0,0));"></div>
<div class="a" style="left:960px;top:1px;width:120px;height:16px;background:radial-gradient(ellipse 50% 45% at 50% 50%,rgba(110,125,150,0.22),rgba(0,0,0,0));"></div>
<div class="a" style="left:1090px;top:1px;width:16px;height:16px;background:radial-gradient(ellipse 50% 45% at 50% 50%,rgba(120,70,60,0.4),rgba(0,0,0,0));"></div>
<div class="a" style="left:1112px;top:1px;width:50px;height:16px;background:radial-gradient(ellipse 50% 45% at 50% 50%,rgba(120,130,150,0.2),rgba(0,0,0,0));"></div>
<div class="t" id="title2" style="left:526px;top:2.03px;font-size:12px;font-weight:normal;color:#000;transform:scaleX(0.9600);">GRASS GIS Map Display: 1 &nbsp;- Location: M-4</div>
<svg style="left:504px;top:0" width="16" height="17"><path d="M7.4 1L14 7.4L7.4 16L1.2 7.4z" fill="#fff"/><path d="M3.6 11L7.4 16L9 14" fill="none" stroke="#111" stroke-width="1.2"/><path d="M5.4 11.4l0.1 0M5.8 9.4l0.1 0M4.8 7.4l0.1 0M7.4 3l0 0.6M10 6l0.2 -0.4M9 7.6l0.2 -0.2" stroke="#1c9a22" stroke-width="1.3" stroke-linecap="round"/><circle cx="10.7" cy="12" r="3.5" fill="#3a6c9c"/><path d="M9 10.4q1.6 -0.6 1.4 1t1 1.6l-1.4 1.4q-1.4 -1.6 -1 -4z" fill="#dfe9f2" opacity="0.85"/><path d="M12 9.6l1.4 1.4l-0.6 1.6z" fill="#dfe9f2" opacity="0.8"/></svg>
<div class="a" style="left:1186px;top:0px;width:103px;height:14px;border:1px solid #5a6a7e;border-top:none;border-radius:0 0 5px 5px;box-sizing:border-box;background:linear-gradient(#c5d6ea,#a9bfd9 50%,#93add0 52%,#a9c2de);overflow:hidden;"></div>
<div class="a" style="left:1241px;top:0px;width:47px;height:13px;background:linear-gradient(#e9a393,#d4624c 45%,#c03a22 50%,#d9826a);border-radius:0 0 4px 0;"></div>
<div class="a" style="left:1214px;top:0px;width:1px;height:13px;background:#5a6a7e;"></div>
<div class="a" style="left:1241px;top:0px;width:1px;height:13px;background:#5a6a7e;"></div>
<div class="a" style="left:1195px;top:4px;width:12px;height:5px;background:#fff;border:1px solid #3e4857;box-sizing:border-box;border-radius:1.5px;"></div>
<div class="a" style="left:1222px;top:-1px;width:12px;height:10px;background:#fff;border:1px solid #3e4857;box-sizing:border-box;border-radius:1px;"></div>
<div class="a" style="left:1225px;top:2px;width:6px;height:4px;background:#9fb9d6;border:1px solid #3e4857;box-sizing:border-box;"></div>
<svg style="left:1257px;top:0;overflow:hidden" width="18" height="9.6"><path d="M3.6 -4L13.4 11M13.4 -4L3.6 11" stroke="#4a2828" stroke-width="5.6" fill="none"/><path d="M3.6 -4L13.4 11M13.4 -4L3.6 11" stroke="#fff" stroke-width="3.2" fill="none"/><path d="M0.8 9.1h6.6M10.6 9.1h6.6" stroke="#4a2828" stroke-width="1"/></svg>
<div class="a" style="left:503px;top:23px;width:786px;height:564px;background:#4e5966;"></div>
<div class="a" style="left:504px;top:24px;width:784px;height:562px;background:#dcdcdc;"></div>
<div class="a" style="left:504px;top:24px;width:784px;height:1px;background:#b6b6b6;"></div>
<div class="tb" style="left:504px;top:25px;width:625px;height:34px;"><div class="grip"><i style="top:5px"></i><i style="top:9px"></i><i style="top:13px"></i><i style="top:17px"></i><i style="top:21px"></i><i style="top:25px"></i></div></div>
<div class="a" style="left:708px;top:28px;width:31px;height:28px;border:1px solid #6c6c6c;border-radius:4px;box-sizing:border-box;background:linear-gradient(#d7d9e2,#d2d4e2 30%,#d6d8e8);"></div>
<svg class="ic" style="left:517px;top:30px" width="24" height="24" viewBox="0 0 24 24"><path d="M1.8 7q5 -4.6 11 -4.2t7.4 3" fill="none" stroke="#b8b8c4" stroke-width="0.8"/><path d="M1.3 10.4q3.4 -5.6 9.6 -5.6q6 0 11.6 5.4q-5.4 6.2 -11.4 6.2q-6.2 0 -9.8 -6z" fill="#f4f4f6" stroke="#b4b4c0" stroke-width="0.9"/><circle cx="11" cy="9.9" r="4.2" fill="#5b8ecb"/><circle cx="11" cy="9.9" r="4.2" fill="none" stroke="#8db2de" stroke-width="0.9"/><circle cx="11.2" cy="9.4" r="1.6" fill="#27303c"/><circle cx="10.3" cy="8.4" r="0.8" fill="#fff"/><path d="M20.4 9.6l1.8 0.9l-1.4 1" fill="#a09090"/></svg>
<svg class="ic" style="left:548px;top:30px" width="24" height="24" viewBox="0 0 24 24"><path d="M0.5 10v12.5h6" fill="none" stroke="#9c9c9c" stroke-width="1"/><rect x="2.5" y="5.5" width="15" height="15" fill="#ebebeb" stroke="#a6a6a6"/><rect x="13" y="13" width="11" height="11" rx="2.6" fill="#3f627c"/><path d="M15 18.3a3.6 3.6 0 0 1 6.4 -2.2M22 18.7a3.6 3.6 0 0 1 -6.4 2.2" fill="none" stroke="#fff" stroke-width="1.5"/><path d="M22.6 14.6v3h-3z" fill="#fff"/><path d="M14.4 22.4v-3h3z" fill="#fff"/></svg>
<svg class="ic" style="left:579px;top:30px" width="24" height="24" viewBox="0 0 24 24"><rect x="1.7" y="13" width="8" height="4" fill="#fff"/><path d="M8 13.8l8.6 -6.4q1 -0.6 2.2 -0.3l2.2 0.7q1 0.5 0.2 1.4l-8.8 7q-1 0.6 -2.2 0.3l-2 -0.7q-1.2 -0.8 -0.2 -2z" fill="#f08484" stroke="#e06c6c" stroke-width="0.7"/><path d="M8.3 14.3l3.8 1.2l8.9 -7" fill="none" stroke="#f8b4b4" stroke-width="0.9"/></svg>
<svg class="ic" style="left:618px;top:30px" width="24" height="24" viewBox="0 0 24 24"><path d="M4 4l10.4 2.6l-3 2.6l7.6 7.6l-2.6 2.6l-7.6 -7.6l-2.6 3z" fill="#e6e6e6" stroke="#5e5e5e" stroke-width="1.1" stroke-linejoin="round"/></svg>
<svg class="ic" style="left:649px;top:30px" width="24" height="24" viewBox="0 0 24 24"><path d="M0.4 0.5l6.4 1.8l-1.9 1.5l4.8 4.8l-1.5 1.5l-4.8 -4.8l-1.4 1.8z" fill="#e6e6e6" stroke="#5e5e5e" stroke-width="0.9" stroke-linejoin="round"/><rect x="11.6" y="8.5" width="12" height="15" rx="0.8" fill="#f5f1ea" stroke="#3a6484" stroke-width="1.3"/><path d="M13.6 11.6h8M13.6 14.6h8M13.6 17.6h8M13.6 20.6h8" stroke="#2f5877" stroke-width="1.1"/></svg>
<svg class="ic" style="left:680px;top:30px" width="24" height="24" viewBox="0 0 24 24"><path d="M12 0.7l4.2 4.6h-2.5v3.3h-3.4v-3.3h-2.5z" fill="#6e96b4" stroke="#46708f" stroke-width="0.9" stroke-linejoin="round" transform="rotate(0 12 12)"/><path d="M12 0.7l4.2 4.6h-2.5v3.3h-3.4v-3.3h-2.5z" fill="#6e96b4" stroke="#46708f" stroke-width="0.9" stroke-linejoin="round" transform="rotate(90 12 12)"/><path d="M12 0.7l4.2 4.6h-2.5v3.3h-3.4v-3.3h-2.5z" fill="#6e96b4" stroke="#46708f" stroke-width="0.9" stroke-linejoin="round" transform="rotate(180 12 12)"/><path d="M12 0.7l4.2 4.6h-2.5v3.3h-3.4v-3.3h-2.5z" fill="#6e96b4" stroke="#46708f" stroke-width="0.9" stroke-linejoin="round" transform="rotate(270 12 12)"/></svg>
<svg class="ic" style="left:711px;top:30px" width="24" height="24" viewBox="0 0 24 24"><path d="M8.29268 16.4311L2.4 22.6" stroke="#a58a10" stroke-width="3.4" stroke-linecap="butt"/><path d="M8.29268 16.4311L2.60722 22.3831" stroke="#f4d83a" stroke-width="2" stroke-linecap="butt"/><path d="M10.1577 14.4787L8.29268 16.4311" stroke="#1a1a1a" stroke-width="3.2"/><circle cx="15.2" cy="9.2" r="7.6" fill="#ececec" stroke="#a2a2a2" stroke-width="1"/><path d="M8.8 8.2a6.4 6.4 0 0 1 12.8 0q-6.4 2.5 -12.8 0z" fill="#fafafa" opacity="0.9"/><path d="M11.2 9.2h8M15.2 5.2v8" stroke="#5f8cae" stroke-width="2.2"/></svg>
<svg class="ic" style="left:742px;top:30px" width="24" height="24" viewBox="0 0 24 24"><path d="M7.43687 16.3774L1.4 22.6" stroke="#a58a10" stroke-width="3.4" stroke-linecap="butt"/><path d="M7.43687 16.3774L1.60889 22.3847" stroke="#f4d83a" stroke-width="2" stroke-linecap="butt"/><path d="M9.31691 14.4395L7.43687 16.3774" stroke="#1a1a1a" stroke-width="3.2"/><circle cx="14.4" cy="9.2" r="7.6" fill="#ececec" stroke="#a2a2a2" stroke-width="1"/><path d="M8 8.2a6.4 6.4 0 0 1 12.8 0q-6.4 2.5 -12.8 0z" fill="#fafafa" opacity="0.9"/><path d="M10.2 9.2h8.4" stroke="#5f8cae" stroke-width="2.2"/></svg>
<svg class="ic" style="left:773px;top:30px" width="24" height="24" viewBox="0 0 24 24"><path d="M0 0h6.2l-2 2l3 3l-2.2 2.2l-3 -3l-2 2z" fill="#6e96b4" stroke="#46708f" stroke-width="0.8" stroke-linejoin="round" transform="translate(0.6 0.6) rotate(0)"/><path d="M0 0h6.2l-2 2l3 3l-2.2 2.2l-3 -3l-2 2z" fill="#6e96b4" stroke="#46708f" stroke-width="0.8" stroke-linejoin="round" transform="translate(23.4 0.6) rotate(90)"/><path d="M0 0h6.2l-2 2l3 3l-2.2 2.2l-3 -3l-2 2z" fill="#6e96b4" stroke="#46708f" stroke-width="0.8" stroke-linejoin="round" transform="translate(23.4 23.2) rotate(180)"/><path d="M7.3818 15.8348L1.2 22.4" stroke="#a58a10" stroke-width="3.4" stroke-linecap="butt"/><path d="M7.3818 15.8348L1.40566 22.1816" stroke="#f4d83a" stroke-width="2" stroke-linecap="butt"/><path d="M9.23273 13.8691L7.3818 15.8348" stroke="#1a1a1a" stroke-width="3.2"/><circle cx="14.1" cy="8.7" r="7.4" fill="#ececec" stroke="#a2a2a2" stroke-width="1"/><path d="M7.9 7.7a6.2 6.2 0 0 1 12.4 0q-6.2 2.5 -12.4 0z" fill="#fafafa" opacity="0.9"/></svg>
<svg class="ic" style="left:804px;top:30px" width="24" height="24" viewBox="0 0 24 24"><path d="M7.38897 15.9276L1.2 22.4" stroke="#a58a10" stroke-width="3.4" stroke-linecap="butt"/><path d="M7.38897 15.9276L1.40733 22.1832" stroke="#f4d83a" stroke-width="2" stroke-linecap="butt"/><path d="M9.25495 13.9761L7.38897 15.9276" stroke="#1a1a1a" stroke-width="3.2"/><circle cx="14.3" cy="8.7" r="7.6" fill="#ececec" stroke="#a2a2a2" stroke-width="1"/><path d="M7.9 7.7a6.4 6.4 0 0 1 12.8 0q-6.4 2.5 -12.8 0z" fill="#fafafa" opacity="0.9"/><rect x="13" y="13" width="11" height="11" rx="2.6" fill="#3f627c"/><path d="M21.4 14.6q-4.6 3.4 0 7.4q-2.6 -0.4 -5.4 -3.7q2.8 -3.3 5.4 -3.7z" fill="#fff"/></svg>
<svg class="ic" style="left:835px;top:30px" width="24" height="24" viewBox="0 0 24 24"><path d="M7.38897 15.9276L1.2 22.4" stroke="#a58a10" stroke-width="3.4" stroke-linecap="butt"/><path d="M7.38897 15.9276L1.40733 22.1832" stroke="#f4d83a" stroke-width="2" stroke-linecap="butt"/><path d="M9.25495 13.9761L7.38897 15.9276" stroke="#1a1a1a" stroke-width="3.2"/><circle cx="14.3" cy="8.7" r="7.6" fill="#ececec" stroke="#a2a2a2" stroke-width="1"/><path d="M7.9 7.7a6.4 6.4 0 0 1 12.8 0q-6.4 2.5 -12.8 0z" fill="#fafafa" opacity="0.9"/><rect x="13" y="13" width="11" height="11" rx="2.6" fill="#3f627c"/><path d="M14.8 14.2h7.4a1.2 1.2 0 0 1 1.2 1.2v3.4q-5 0.4 -9.8 0v-3.4a1.2 1.2 0 0 1 1.2 -1.2z" fill="#76909f"/><path d="M23 23v-5.2q-0.6 4.4 -5.4 5.2z" fill="#e4e4e4"/></svg>
<svg class="ic" style="left:873px;top:30px" width="24" height="24" viewBox="0 0 24 24"><rect x="8.9" y="1.2" width="3.9" height="3.9" fill="#335a78"/><rect x="12.8" y="1.2" width="3.9" height="3.9" fill="#8fb0c9"/><rect x="16.7" y="1.2" width="3.9" height="3.9" fill="#335a78"/><rect x="8.9" y="5.1" width="3.9" height="3.9" fill="#8fb0c9"/><rect x="12.8" y="5.1" width="3.9" height="3.9" fill="#335a78"/><rect x="16.7" y="5.1" width="3.9" height="3.9" fill="#8fb0c9"/><rect x="8.9" y="9" width="3.9" height="3.9" fill="#335a78"/><rect x="12.8" y="9" width="3.9" height="3.9" fill="#335a78"/><path d="M2.6 22.5v-5l2 -2.2h2l1.6 1.4h1.6v-3.2h1.6v2h1.8v-3.4h2v4.6h1.4v3.2l2.4 2.6z" fill="#7f9fb8"/><path d="M2.6 21q2.2 -4.6 4.6 -3.4t5 0.6t4.4 -5.2q1.6 -1.2 3.4 3" fill="none" stroke="#d42020" stroke-width="1.2"/><path d="M1.4 6.2v17.3h21.6" fill="none" stroke="#3c3c3c" stroke-width="1.1"/><path d="M1.4 5l1.2 2.4h-1.2zM23.8 23.5l-2.4 -1.2v1.2z" fill="#3c3c3c"/></svg>
<svg class="ic" style="left:912px;top:30px" width="24" height="24" viewBox="0 0 24 24"><rect x="1.2" y="0.6" width="3.2" height="3.2" fill="#f2ee20" stroke="#5a5a5a" stroke-width="0.8"/><rect x="1.2" y="6" width="3.2" height="3.2" fill="#e85050" stroke="#5a5a5a" stroke-width="0.8"/><path d="M6.2 3.2h3.4M6.2 8.4h3.4" stroke="#4a4a4a" stroke-width="1"/><path d="M17.2 7.6l3.2 -7l3.2 7M18.5 5.2h3.8" fill="none" stroke="#4a4a4a" stroke-width="1.2"/><rect x="0.9" y="15" width="11.8" height="2.6" rx="1" fill="#4a4a4a"/><path d="M2.2 16.3h2.6M8.6 16.3h2.8" stroke="#f0f0f0" stroke-width="1"/><rect x="14.5" y="14" width="10.4" height="10" rx="2.4" fill="#5c9c52"/><path d="M16.7 19h6M19.7 16v6" stroke="#fff" stroke-width="2" fill="none"/></svg>
<svg class="ic" style="left:951px;top:30px" width="24" height="24" viewBox="0 0 24 24"><path d="M4.2 1.5q2.6 0 2.6 3.5h13.8v16.4h-16.6q-2.6 0 -2.6 -2.4v-15q0 -2.5 2.8 -2.5z" fill="#ececec" stroke="#a6a6a6"/><path d="M6.8 5v14.4q0 2 -2.8 2" fill="none" stroke="#a6a6a6"/><path d="M7.3 5.5h5v15.4h-5z" fill="#dcdcdc"/><rect x="14" y="13" width="11" height="11" rx="2.6" fill="#3f627c"/><path d="M18.4 15.3h-2.2v6.6h2.2" fill="none" stroke="#fff" stroke-width="1.2"/><path d="M18 18.6h5.4M21.4 16.5l2.2 2.1l-2.2 2.1" fill="none" stroke="#fff" stroke-width="1.2"/></svg>
<svg class="ic" style="left:982px;top:30px" width="24" height="24" viewBox="0 0 24 24"><rect x="8.6" y="2" width="8.8" height="7" fill="#fdfdfd" stroke="#b0b0b0" stroke-width="0.8"/><rect x="3" y="7.8" width="19.6" height="10.4" rx="2.4" fill="#6e96b4" stroke="#46708f" stroke-width="1"/><path d="M4 9.6h17.6" stroke="#9dbbd2" stroke-width="1.4"/><rect x="7.6" y="13" width="10.4" height="2" fill="#3c3c3c"/><rect x="8.2" y="14.4" width="9.2" height="7.6" fill="#fdfdfd" stroke="#9a9a9a" stroke-width="0.8"/><path d="M10 17.2h5.6M10 19.4h5.6" stroke="#5a5a5a" stroke-width="1"/></svg>
<div class="combo" style="left:1019px;top:32px;width:110px;height:21px"><div class="arr" style="right:5px;top:8px"></div></div>
<div class="t" id="cb1" style="left:1023.6px;top:34.86px;font-size:11px;font-weight:normal;color:#000;transform:scaleX(0.9304);">2D view</div>
<div class="a" style="left:504px;top:60px;width:784px;height:502px;background:#fff;"></div>
<div class="a" style="left:504px;top:59px;width:625px;height:1px;background:#e4e4ea;"></div>
<div class="a" style="left:1129px;top:59px;width:159px;height:1px;background:#a4a4a4;"></div>
<div class="a" style="left:1129px;top:25px;width:1px;height:34px;background:#c4c4c4;"></div>
<div class="a" style="left:1287px;top:60px;width:1px;height:502px;background:#e8e8e8;"></div>
<svg style="left:504px;top:60px;overflow:hidden" width="783" height="502" viewBox="504 60 783 502"><g fill="none" stroke="#000" stroke-width="1" shape-rendering="crispEdges">
<path d="M723.8 60.0L740.6 92.8L758.5 120.0L765.5 131.6L768.8 135.0L774.0 143.2L781.0 154.8L792.0 172.3L799.6 185.0L810.0 202.4L820.0 219.8L830.4 237.3L832.6 240.0L840.8 257.4L851.8 272.5L858.8 286.5L868.3 300.0L879.0 316.6L889.6 333.2L900.3 349.8L905.6 358.0L909.4 366.3L909.8 369.7L910.6 377.1L907.3 379.6L905.6 386.2L907.3 392.9L912.4 395.6L924.0 399.3L928.1 401.6L939.5 424.8L943.6 442.3L947.1 459.7L950.2 470.0L952.4 491.5L954.7 517.2L955.5 528.0L957.5 563.0L963.1 563.0L961.1 528.0L960.3 517.2L958.0 491.5L955.8 470.0L952.7 459.7L949.2 442.3L945.1 424.8L931.6 401.6L929.7 394.5L925.5 384.6L926.3 378.0L931.3 375.5L991.0 358.0L989.4 351.7L920.5 370.5L913.9 366.3L909.8 358.0L904.6 349.8L894.2 333.2L883.7 316.6L873.3 300.0L864.6 286.5L860.0 275.0L861.5 271.0L858.0 270.0L847.2 257.4L836.7 240.0L835.0 237.3L824.0 219.8L813.6 202.4L803.7 185.0L797.5 174.0L796.0 170.0L785.0 154.8L776.9 143.2L772.3 135.0L770.8 127.7L748.8 92.8L731.4 60.0z" fill="#c6c6c6"/>
<path d="M731.0 60.0L748.6 92.8L770.0 125.0" stroke-width="1.6"/>
<path d="M709 61.5l4 3.6M709.4 65l3.4-3.6M713 64q3 0.6 4.6-1.2t5-2.4"/>
<path d="M723.2 72.5L737.0 94.0L751.0 118.4L761.8 135.0" stroke-width="2"/>
<path d="M739.0 93.5L746.0 104.0L754.0 116.5"/>
<path d="M734.6 92.4L739.8 95.6M736.2 96.6L738.2 91.4M754.0 125.4L759.2 128.6M755.6 129.6L757.6 124.4"/>
<path d="M742.4 60.0L766.2 98.0L771.0 106.0L776.0 113.0L780.0 119.0L783.0 126.0L783.3 131.6L795.5 151.4L802.5 163.0L811.8 189.7L824.0 219.8"/>
<path d="M759.5 98.5l8 2.4l-6-1.2zM763 100l5 4M771 105.5q-2 3 1 6l6 4l-5-7z" stroke-width="1.6" fill="#000"/>
<path d="M795.5 151.4L802.5 163.0" stroke-width="2"/>
<path d="M780.1 129.7L786.5 133.5M782.0 134.8L784.6 128.4" stroke-width="1.5"/>
<path d="M793.4 148.9L798.6 152.1M795.0 153.1L797.0 147.9"/>
<path d="M735.4 115.0L756.0 150.4L772.8 142.6"/>
<path d="M768.0 127.0L771.0 130.0L778.0 138.6L775.0 141.0"/>
<path d="M763.0 147.3L787.4 189.7L827.4 254.0"/>
<path d="M765.6 156.7L770.8 159.9M767.2 160.9L769.2 155.7"/>
<path d="M771.4 164.3L776.6 167.5M773.0 168.5L775.0 163.3"/>
<path d="M780.1 178.8L785.3 182.0M781.7 183.0L783.7 177.8"/>
<path d="M787.7 191.4L792.9 194.6M789.3 195.6L791.3 190.4"/>
<path d="M799.9 212.4L805.1 215.6M801.5 216.6L803.5 211.4"/>
<path d="M812.1 231.0L817.3 234.2M813.7 235.2L815.7 230.0"/>
<path d="M827.4 254.0L836.7 250.5L832.6 264.4z" fill="#c6c6c6"/>
<path d="M828.6 263.8L830.4 262.6L840.6 279.0L838.6 280.4z"/>
<path d="M835.0 268.5L847.0 272.0L845.0 263.0L841.5 262.0L843.0 258.0"/>
<path d="M858 268l2.5-1.2l1.6 4"/>
<path d="M933.9 390.0L940.9 405.7"/>
<path d="M932.2 391.0L939.4 406.5L940.9 405.7"/>
<path d="M928.8 378.0L938.0 399.5"/>
<path d="M924.6 403.4L930.0 414.0L937.1 424.8L941.2 442.3L944.7 459.7L947.8 470.0L950.0 491.5L952.3 517.2L953.1 528.0L955.1 563.0" stroke-width="4.4"/>
<path d="M924.6 403.4L930.0 414.0L937.1 424.8L941.2 442.3L944.7 459.7L947.8 470.0L950.0 491.5L952.3 517.2L953.1 528.0L955.1 563.0" stroke="#fff" stroke-width="1" stroke-dasharray="9 1.5"/>
<path d="M947.3 422.5L951.6 442.3L955.1 459.7L958.2 470.0L960.4 491.5L962.7 517.2L963.5 528.0L965.5 563.0" stroke-width="4.4"/>
<path d="M947.3 422.5L951.6 442.3L955.1 459.7L958.2 470.0L960.4 491.5L962.7 517.2L963.5 528.0L965.5 563.0" stroke="#fff" stroke-width="1" stroke-dasharray="9 1.5"/>
<path d="M956.6 413.2L958.0 414.0L969.3 459.7L973.9 491.5L976.6 537.0"/>
</g></svg>
<div class="a" style="left:504px;top:562px;width:784px;height:2px;background:#9a9a9a;"></div>
<div class="a" style="left:504px;top:564px;width:784px;height:22px;background:#f0eded;border:1px solid #fff;box-sizing:border-box;"></div>
<div class="t" id="st1" style="left:506.4px;top:568.36px;font-size:11px;font-weight:normal;color:#000;transform:scaleX(0.9722);">534315.01; 5704043.65</div>
<div class="combo" style="left:938px;top:565px;width:173px;height:20px"><div class="arr" style="right:5px;top:8px"></div></div>
<div class="t" id="cb2" style="left:942px;top:567.36px;font-size:11px;font-weight:normal;color:#000;transform:scaleX(0.9658);">Coordinates</div>
<div class="a" style="left:1200px;top:564px;width:1px;height:22px;background:#e2dfdf;"></div>
<div class="cb" style="left:1206px;top:568px"><b></b></div>
<svg style="left:1206px;top:568px" width="13" height="13"><path d="M3 6.2l1.4 -0.6l1.5 2.6q1.6 -3.6 3.6 -5.6l0.9 0.5q-2.2 2.8 -3.8 7.4h-1.4q-0.9 -2.4 -2.2 -4.3z" fill="#2f3f9c"/></svg>
<div class="t" id="cbt" style="left:1222.8px;top:567.36px;font-size:11px;font-weight:normal;color:#000;transform:scaleX(0.9872);">Отрисовать</div>
</body>
</html>
